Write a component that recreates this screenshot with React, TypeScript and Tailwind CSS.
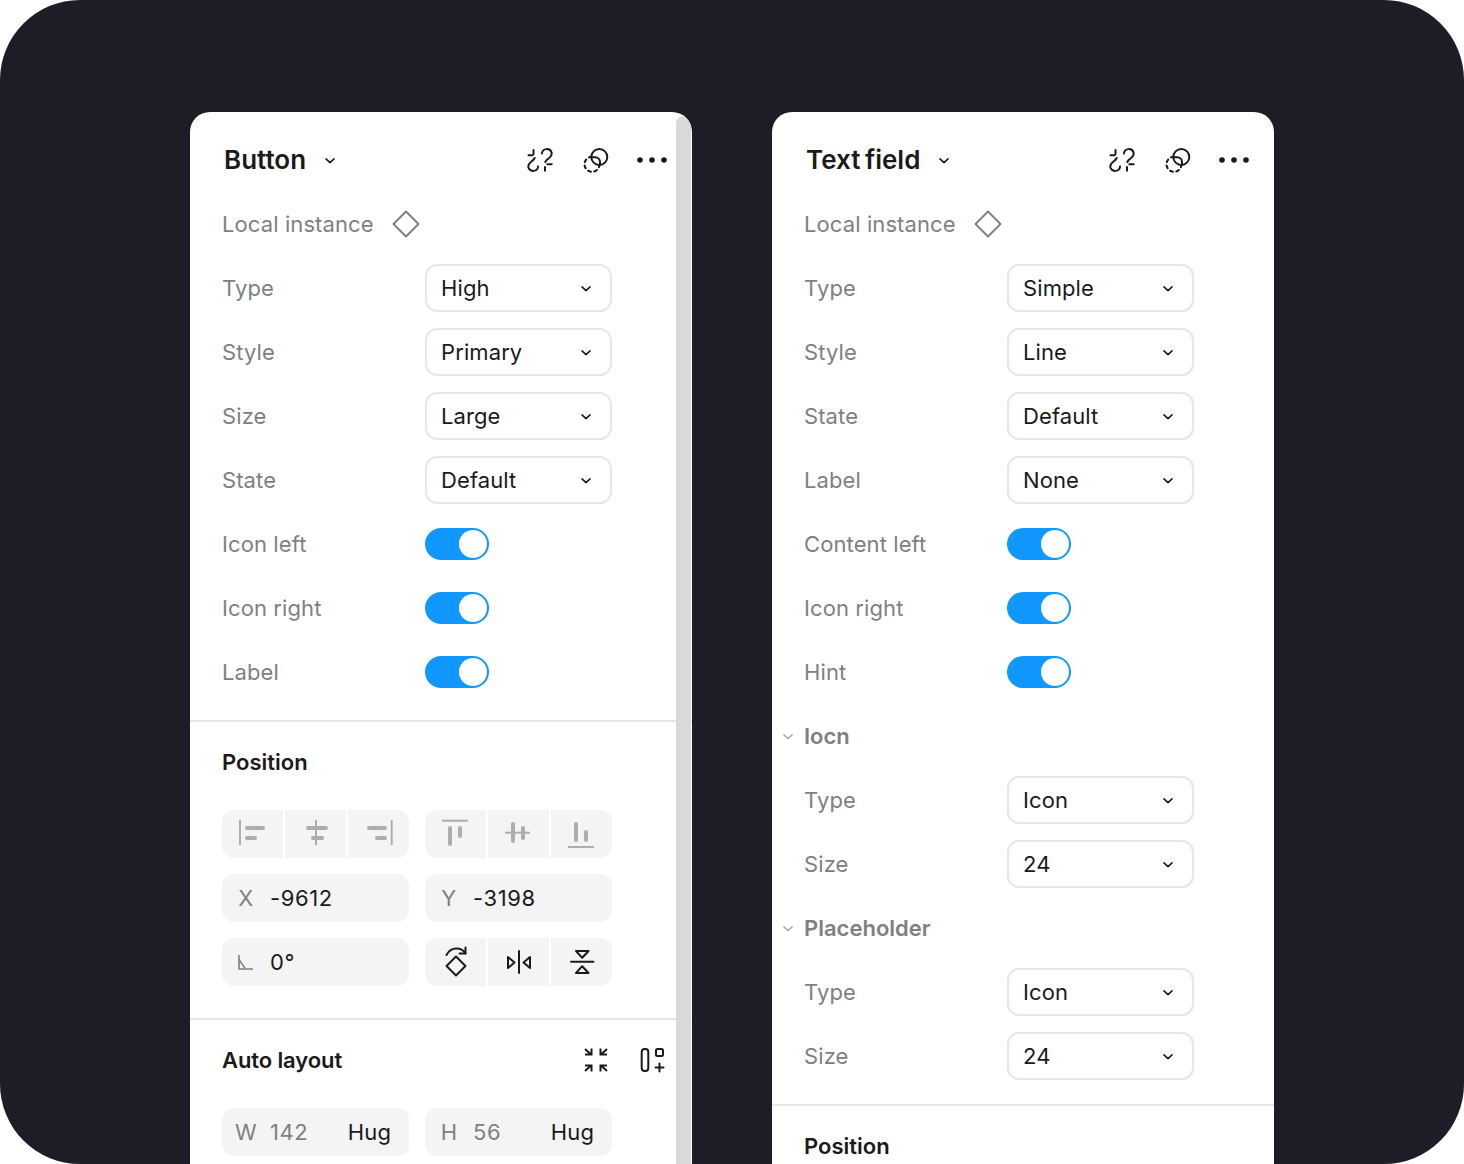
const DARK = "#1a1a1a";
const GREY = "#adadad";

const Chevron = ({ color = DARK }: { color?: string }) => (
  <svg width="12" height="12" viewBox="0 0 12 12" fill="none">
    <path d="M2 4.8L6 8.6L10 4.8" stroke={color} strokeWidth="1.6" strokeLinecap="round" strokeLinejoin="round" />
  </svg>
);

const DetachIcon = () => (
  <svg width="28" height="28" viewBox="0 0 28 28" fill="none" stroke={DARK} strokeWidth="2" strokeLinecap="round">
    <path d="M15.9 7.5A5 5 0 0 1 25.6 6.5C26.2 9.5 24.5 11 22.5 12.5C21 13.6 20 14.6 19.3 16" />
    <path d="M12.1 20.5A5 5 0 0 1 2.4 21.5C1.8 18.5 3.5 17 5.5 15.5C7 14.4 8 13.4 8.7 12" />
    <path d="M7.5 4V8M2.5 9.3H6.7M19 21V24.7M21.3 18.3H25.7" />
  </svg>
);

const ComponentIcon = () => (
  <svg width="28" height="28" viewBox="0 0 28 28" fill="none" stroke={DARK} strokeWidth="2" strokeLinecap="round">
    <circle cx="10" cy="18.3" r="7.5" strokeDasharray="3 3.4" />
    <circle cx="17.3" cy="11" r="8" fill="white" />
    <path d="M9.8 11.2H13.2A4.8 4.8 0 0 1 18 16V18.5" />
  </svg>
);

const Dots = () => (
  <svg width="32" height="8" viewBox="0 0 32 8" fill={DARK}>
    <circle cx="4" cy="4" r="2.8" />
    <circle cx="16" cy="4" r="2.8" />
    <circle cx="28" cy="4" r="2.8" />
  </svg>
);

const DiamondIcon = () => (
  <svg width="28" height="28" viewBox="0 0 28 28" fill="none">
    <path d="M14 1.5L26.5 14L14 26.5L1.5 14Z" stroke="#808080" strokeWidth="2" strokeLinejoin="round" />
  </svg>
);

const AlignIcon = ({ line, bars }: { line: string; bars: [number, number, number, number][] }) => (
  <svg className="w-full h-full" viewBox="0 0 61 48" fill={GREY}>
    <path d={line} stroke={GREY} strokeWidth="2" />
    {bars.map(([x, y, w, h]) => (
      <rect key={`${x}-${y}`} x={x} y={y} width={w} height={h} rx="2" />
    ))}
  </svg>
);

const RotateIcon = () => (
  <svg className="w-full h-full" viewBox="0 0 61 48" fill="none" stroke={DARK} strokeWidth="2" strokeLinejoin="round" strokeLinecap="round">
    <path d="M31 18.5L40.5 28L31 37.5L21.5 28Z" />
    <path d="M21.5 17C24 12 28 10.5 31.5 10.5C35 10.5 38.5 12 40.5 15.5" />
    <path d="M34.5 15.5H40.5V9.5" />
  </svg>
);

const FlipHIcon = () => (
  <svg className="w-full h-full" viewBox="0 0 61 48" fill="none" stroke={DARK} strokeWidth="2" strokeLinejoin="round" strokeLinecap="round">
    <path d="M31 13V35" />
    <path d="M20 19L26.5 24.5L20 30Z" />
    <path d="M42 19L35.5 24.5L42 30Z" />
  </svg>
);

const FlipVIcon = () => (
  <svg className="w-full h-full" viewBox="0 0 61 48" fill="none" stroke={DARK} strokeWidth="2" strokeLinejoin="round" strokeLinecap="round">
    <path d="M20 23.7H42.5" />
    <path d="M25 13H37.5L31.2 19.8Z" />
    <path d="M25 35H37.5L31.2 28.2Z" />
  </svg>
);

const AngleIcon = () => (
  <svg width="18" height="18" viewBox="0 0 18 18" fill="none" stroke="#808080" strokeWidth="1.6">
    <path d="M2 2V16H16" />
    <path d="M2 6.5L8.5 16" strokeWidth="1.4" />
  </svg>
);

const CollapseIcon = () => (
  <svg width="28" height="28" viewBox="0 0 28 28" fill="none" stroke={DARK} strokeWidth="2">
    <path d="M3 3L9 8.5M3 8.5H9.5V2.5" />
    <path d="M25 3L19 8.5M25 8.5H18.5V2.5" />
    <path d="M3 25L9 19.5M3 19.5H9.5V25.5" />
    <path d="M25 25L19 19.5M25 19.5H18.5V25.5" />
  </svg>
);

const LayoutPlusIcon = () => (
  <svg width="28" height="28" viewBox="0 0 28 28" fill="none" stroke={DARK} strokeWidth="2" strokeLinecap="round">
    <rect x="3.7" y="3" width="6.6" height="22" rx="3" />
    <rect x="18" y="3" width="7" height="7" rx="1.5" />
    <path d="M21.5 17.5V25.5M17.5 21.5H25.5" />
  </svg>
);

const Header = ({ title }: { title: string }) => (
  <div className="flex items-center justify-between h-12 pl-[34px] pr-6">
    <div className="flex items-center gap-[18px]">
      <span className="text-[26px] font-semibold text-[#1a1a1a] -translate-y-px tracking-normal [word-spacing:-2px]">{title}</span>
      <Chevron />
    </div>
    <div className="flex items-center gap-6">
      <span className="w-8 h-8 flex items-center justify-center"><DetachIcon /></span>
      <span className="w-8 h-8 flex items-center justify-center"><ComponentIcon /></span>
      <span className="w-8 h-8 flex items-center justify-center"><Dots /></span>
    </div>
  </div>
);

const Row = ({ label, children }: { label: string; children: React.ReactNode }) => (
  <div className="flex items-center h-12 pl-8">
    <span className="w-[203px] text-[#808080]">{label}</span>
    {children}
  </div>
);

const Select = ({ label, value }: { label: string; value: string }) => (
  <Row label={label}>
    <div className="flex items-center justify-between w-[187px] h-12 pl-3.5 pr-[18px] border-2 border-[#e6e6e6] rounded-xl text-[#1a1a1a]">
      {value}
      <Chevron />
    </div>
  </Row>
);

const Toggle = ({ label }: { label: string }) => (
  <Row label={label}>
    <div className="flex justify-end items-center w-16 h-8 p-0.5 rounded-full bg-[#1098ff]">
      <div className="w-7 h-7 rounded-full bg-white" />
    </div>
  </Row>
);

const Group = ({ label }: { label: string }) => (
  <div className="relative flex items-center h-12 pl-8 font-semibold text-[#808080] tracking-normal">
    <span className="absolute left-[10px] top-[18px]"><Chevron color={GREY} /></span>
    {label}
  </div>
);

const Cell = ({ children }: { children: React.ReactNode }) => (
  <div className="flex-1 h-12 bg-[#f4f4f4] first:rounded-l-xl last:rounded-r-xl">{children}</div>
);

const Segments = ({ children }: { children: React.ReactNode }) => (
  <div className="flex gap-0.5 w-[187px] h-12">{children}</div>
);

const Field = ({ label, value }: { label: React.ReactNode; value: string }) => (
  <div className="flex items-center w-[187px] h-12 rounded-xl bg-[#f4f4f4] text-[#1a1a1a] tracking-[0.6px]">
    <span className="w-12 flex justify-center text-[#808080]">{label}</span>
    {value}
  </div>
);

const SizeField = ({ label, value }: { label: string; value: string }) => (
  <div className="flex items-center w-[187px] h-12 pr-[18px] rounded-xl bg-[#f4f4f4] text-[#808080]">
    <span className="w-12 flex justify-center">{label}</span>
    <span className="flex-1 tracking-[0.6px]">{value}</span>
    <span className="text-[#1a1a1a]">Hug</span>
  </div>
);

const Divider = () => <div className="h-0.5 bg-[#e6e6e6]" />;

const ButtonPanel = () => (
  <div className="relative w-[502px] h-[1052px] shrink-0 overflow-hidden rounded-t-[20px] bg-white">
    <div className="flex flex-col pt-6">
      <Header title="Button" />
      <div className="flex flex-col gap-4 pt-4 pb-6">
        <div className="flex items-center gap-[18px] h-12 pl-8 text-[#808080]">
          Local instance
          <DiamondIcon />
        </div>
        <Select label="Type" value="High" />
        <Select label="Style" value="Primary" />
        <Select label="Size" value="Large" />
        <Select label="State" value="Default" />
        <Toggle label="Icon left" />
        <Toggle label="Icon right" />
        <Toggle label="Label" />
      </div>
      <Divider />
      <div className="flex items-center h-12 mt-4 pl-8 font-semibold text-[#1a1a1a] tracking-normal">Position</div>
      <div className="grid grid-cols-[187px_187px] gap-x-4 gap-y-4 pl-8 pt-6 pb-8">
        <Segments>
          <Cell><AlignIcon line="M18 10V35" bars={[[23, 16, 20, 4], [23, 26, 12, 4]]} /></Cell>
          <Cell><AlignIcon line="M31 10V35" bars={[[21, 16, 22, 4], [26, 26, 13, 4]]} /></Cell>
          <Cell><AlignIcon line="M43.7 10V35" bars={[[19, 16, 20, 4], [27, 26, 12, 4]]} /></Cell>
        </Segments>
        <Segments>
          <Cell><AlignIcon line="M17 10.7H43" bars={[[23, 16, 4, 20], [33, 16, 4, 12]]} /></Cell>
          <Cell><AlignIcon line="M17 22.7H42" bars={[[23, 12, 4, 21], [33, 16, 4, 14]]} /></Cell>
          <Cell><AlignIcon line="M17 37H43" bars={[[23, 12, 4, 20], [33, 20, 4, 12]]} /></Cell>
        </Segments>
        <Field label="X" value="-9612" />
        <Field label="Y" value="-3198" />
        <Field label={<AngleIcon />} value="0°" />
        <Segments>
          <Cell><RotateIcon /></Cell>
          <Cell><FlipHIcon /></Cell>
          <Cell><FlipVIcon /></Cell>
        </Segments>
      </div>
      <Divider />
      <div className="flex items-center justify-between h-12 mt-4 pl-8 pr-6 font-semibold text-[#1a1a1a] tracking-[-0.1px]">
        Auto layout
        <div className="flex items-center gap-6">
          <span className="w-8 h-8 flex items-center justify-center"><CollapseIcon /></span>
          <span className="w-8 h-8 flex items-center justify-center"><LayoutPlusIcon /></span>
        </div>
      </div>
      <div className="flex gap-4 pl-8 pt-6">
        <SizeField label="W" value="142" />
        <SizeField label="H" value="56" />
      </div>
    </div>
    {/* Scrollbar */}
    <div className="absolute top-1 bottom-0 right-px w-[15px] rounded-t-lg bg-[#d9d9d9]" />
  </div>
);

const TextFieldPanel = () => (
  <div className="w-[502px] h-[1052px] shrink-0 overflow-hidden rounded-t-[20px] bg-white">
    <div className="flex flex-col pt-6">
      <Header title="Text field" />
      <div className="flex flex-col gap-4 pt-4 pb-6">
        <div className="flex items-center gap-[18px] h-12 pl-8 text-[#808080]">
          Local instance
          <DiamondIcon />
        </div>
        <Select label="Type" value="Simple" />
        <Select label="Style" value="Line" />
        <Select label="State" value="Default" />
        <Select label="Label" value="None" />
        <Toggle label="Content left" />
        <Toggle label="Icon right" />
        <Toggle label="Hint" />
        <Group label="Iocn" />
        <Select label="Type" value="Icon" />
        <Select label="Size" value="24" />
        <Group label="Placeholder" />
        <Select label="Type" value="Icon" />
        <Select label="Size" value="24" />
      </div>
      <Divider />
      <div className="flex items-center h-12 mt-4 pl-8 font-semibold text-[#1a1a1a] tracking-normal">Position</div>
    </div>
  </div>
);

export default function App() {
  return (
    <div className="w-[1464px] h-[1164px] bg-white overflow-hidden font-['Inter',sans-serif] text-[22px] tracking-[0.1px]">
      <div className="flex justify-center gap-20 h-full pt-28 rounded-[80px] bg-[#1e1c27]">
        <ButtonPanel />
        <TextFieldPanel />
      </div>
    </div>
  );
}
